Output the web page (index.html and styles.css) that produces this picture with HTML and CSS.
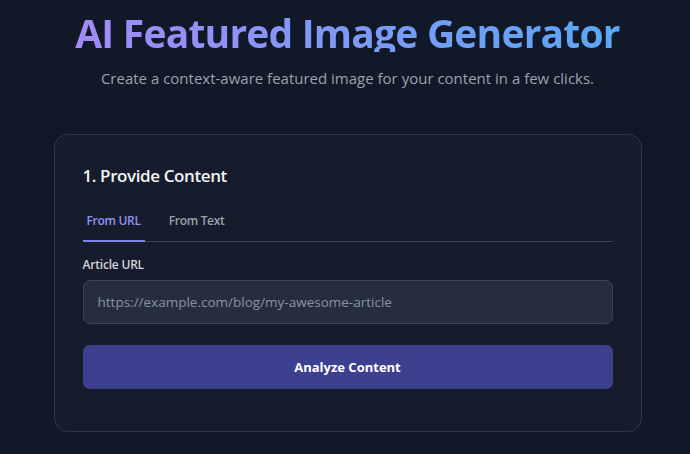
FILE: index.html
```html
<!DOCTYPE html>
<html lang="en">
<head>
<meta charset="utf-8">
<title>AI Featured Image Generator</title>
<link rel="stylesheet" href="styles.css">
</head>
<body>
<main class="page">
  <header class="hero">
    <h1 class="title">AI Featured Image Generator</h1>
    <p class="subtitle">Create a context-aware featured image for your content in a few clicks.</p>
  </header>
  <section class="card">
    <h2 class="card-title">1. Provide Content</h2>
    <div class="tabs">
      <button class="tab tab-active">From URL</button>
      <button class="tab">From Text</button>
    </div>
    <label class="label" for="url">Article URL</label>
    <input class="input" id="url" type="text" placeholder="https://example.com/blog/my-awesome-article">
    <button class="btn">Analyze Content</button>
  </section>
</main>
</body>
</html>
```
FILE: styles.css
```css
* { box-sizing: border-box; }
html, body { margin: 0; padding: 0; }
body {
  background: #111827;
  font-family: "Open Sans", "Noto Sans", sans-serif;
  color: #e5e7eb;
  width: 690px;
  height: 454px;
  overflow: hidden;
}
.page {
  display: flex;
  flex-direction: column;
  align-items: center;
  padding-top: 13px;
  padding-left: 5px;
}
.hero { display: flex; flex-direction: column; align-items: center; }
.title {
  margin: 0;
  font-size: 39px;
  line-height: 39px;
  letter-spacing: -0.8px;
  font-weight: 700;
  background: linear-gradient(90deg, #a28af7, #5aa8f5);
  -webkit-background-clip: text;
  background-clip: text;
  color: transparent;
}
.subtitle {
  margin: 15px 0 0;
  font-size: 15px;
  line-height: 22px;
  color: #9ca3af;
}
.card {
  margin-top: 45px;
  width: 588px;
  background: #161c2b;
  border: 1px solid #2e3746;
  border-radius: 14px;
  padding: 29px 28px 42px;
  display: flex;
  flex-direction: column;
}
.card-title {
  margin: 0;
  font-size: 17px;
  line-height: 24px;
  font-weight: 600;
  letter-spacing: -0.4px;
  color: #f3f4f6;
}
.tabs {
  margin-top: 18px;
  display: flex;
  gap: 20px;
  border-bottom: 1px solid #374151;
}
.tab {
  background: none;
  border: none;
  border-bottom: 2px solid transparent;
  margin-bottom: -1px;
  padding: 6px 4px 11px;
  font-family: inherit;
  font-size: 12px;
  font-weight: 600;
  letter-spacing: -0.3px;
  color: #9ca3af;
}
.tab-active { color: #8e93f0; border-bottom-color: #7c83ea; }
.label {
  margin-top: 15px;
  font-size: 12px;
  font-weight: 600;
  letter-spacing: -0.2px;
  color: #d1d5db;
  line-height: 16px;
}
.input {
  margin-top: 7px;
  height: 44px;
  background: #252e3e;
  border: 1px solid #3b4455;
  border-radius: 7px;
  padding: 0 14px;
  font-family: inherit;
  font-size: 13.5px;
  color: #e5e7eb;
}
.input::placeholder { color: #8b93a1; }
.btn {
  margin-top: 21px;
  height: 44px;
  background: #3d3f8f;
  border: none;
  border-radius: 7px;
  font-family: inherit;
  font-size: 13px;
  font-weight: 700;
  color: #ffffff;
}
```
